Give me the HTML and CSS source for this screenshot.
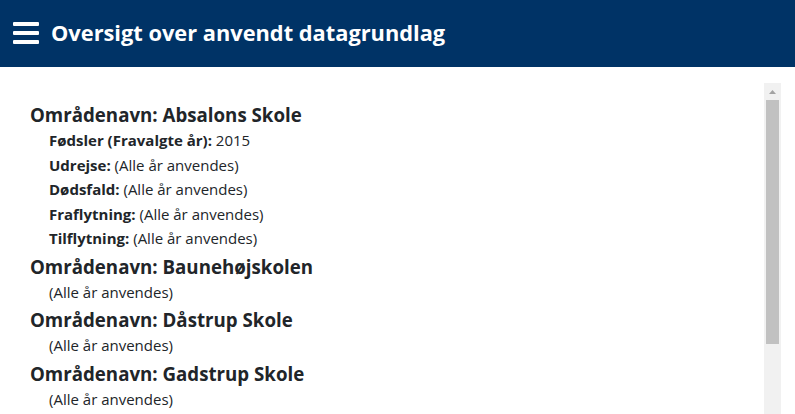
FILE: index.html
```html
<!DOCTYPE html>
<html lang="da">
<head>
  <meta charset="UTF-8">
  <meta name="viewport" content="width=device-width, initial-scale=1.0">
  <title>Oversigt over anvendt datagrundlag</title>
  <link rel="stylesheet" href="styles.css">
</head>
<body>
  <!-- Top bar -->
  <header class="topbar">
    <button class="menu-btn" aria-label="Menu">
      <svg width="26" height="22" viewBox="0 0 26 22">
        <rect x="0" y="0" width="26" height="4" rx="1" fill="#fff"/>
        <rect x="0" y="9" width="26" height="4" rx="1" fill="#fff"/>
        <rect x="0" y="18" width="26" height="4" rx="1" fill="#fff"/>
      </svg>
    </button>
    <h1>Oversigt over anvendt datagrundlag</h1>
  </header>

  <!-- Data list with its scrollbar -->
  <div class="panel">
    <div class="panel-body">
      <section class="area">
        <h5>Områdenavn: Absalons Skole</h5>
        <ul>
          <li><strong>Fødsler (Fravalgte år):</strong> 2015</li>
          <li><strong>Udrejse:</strong> (Alle år anvendes)</li>
          <li><strong>Dødsfald:</strong> (Alle år anvendes)</li>
          <li><strong>Fraflytning:</strong> (Alle år anvendes)</li>
          <li><strong>Tilflytning:</strong> (Alle år anvendes)</li>
        </ul>
      </section>
      <section class="area">
        <h5>Områdenavn: Baunehøjskolen</h5>
        <ul><li>(Alle år anvendes)</li></ul>
      </section>
      <section class="area">
        <h5>Områdenavn: Dåstrup Skole</h5>
        <ul><li>(Alle år anvendes)</li></ul>
      </section>
      <section class="area">
        <h5>Områdenavn: Gadstrup Skole</h5>
        <ul><li>(Alle år anvendes)</li></ul>
      </section>
    </div>
    <div class="scrollbar">
      <div class="scroll-arrow">
        <svg width="7" height="4" viewBox="0 0 7 4"><polygon points="0,4 3.5,0 7,4" fill="#a3a3a3"/></svg>
      </div>
      <div class="scroll-thumb"></div>
    </div>
  </div>
</body>
</html>
```

FILE: styles.css
```css
html, body {
  height: 100%;
}

body {
  display: flex;
  flex-direction: column;
  margin: 0;
  font-family: "Open Sans", "Noto Sans", Arial, sans-serif;
  color: #212529;
  background: #fff;
  overflow: hidden;
}

.topbar {
  display: flex;
  align-items: center;
  flex: none;
  height: 67px;
  padding: 0 13px;
  background-color: #003366;
  color: #fff;
  box-sizing: border-box;
}

.menu-btn {
  display: flex;
  padding: 0;
  margin: 0 12px 2px 0;
  border: none;
  background: none;
  cursor: pointer;
}

.topbar h1 {
  margin: 0 0 2px;
  font-size: 21.8px;
  font-weight: 700;
}

.panel {
  display: flex;
  flex: 1;
  min-height: 0;
  margin: 16px 14px 0;
}

.panel-body {
  flex: 1;
  padding: 18px 16px 0;
  overflow: hidden;
}

.scrollbar {
  display: flex;
  flex-direction: column;
  width: 17px;
  background: #f1f1f1;
}

.scroll-arrow {
  display: flex;
  justify-content: center;
  align-items: center;
  height: 17px;
}

.scroll-thumb {
  height: 244px;
  margin: 0 2px;
  background: #c1c1c1;
}

.area h5 {
  margin: 0;
  font-size: 18.7px;
  font-weight: 700;
  line-height: 27px;
}

.area ul {
  list-style: none;
  margin: 0 0 2px;
  padding: 0 0 0 19px;
}

.area li {
  font-size: 15px;
  line-height: 24.5px;
}

.area strong {
  font-weight: 700;
}
```
